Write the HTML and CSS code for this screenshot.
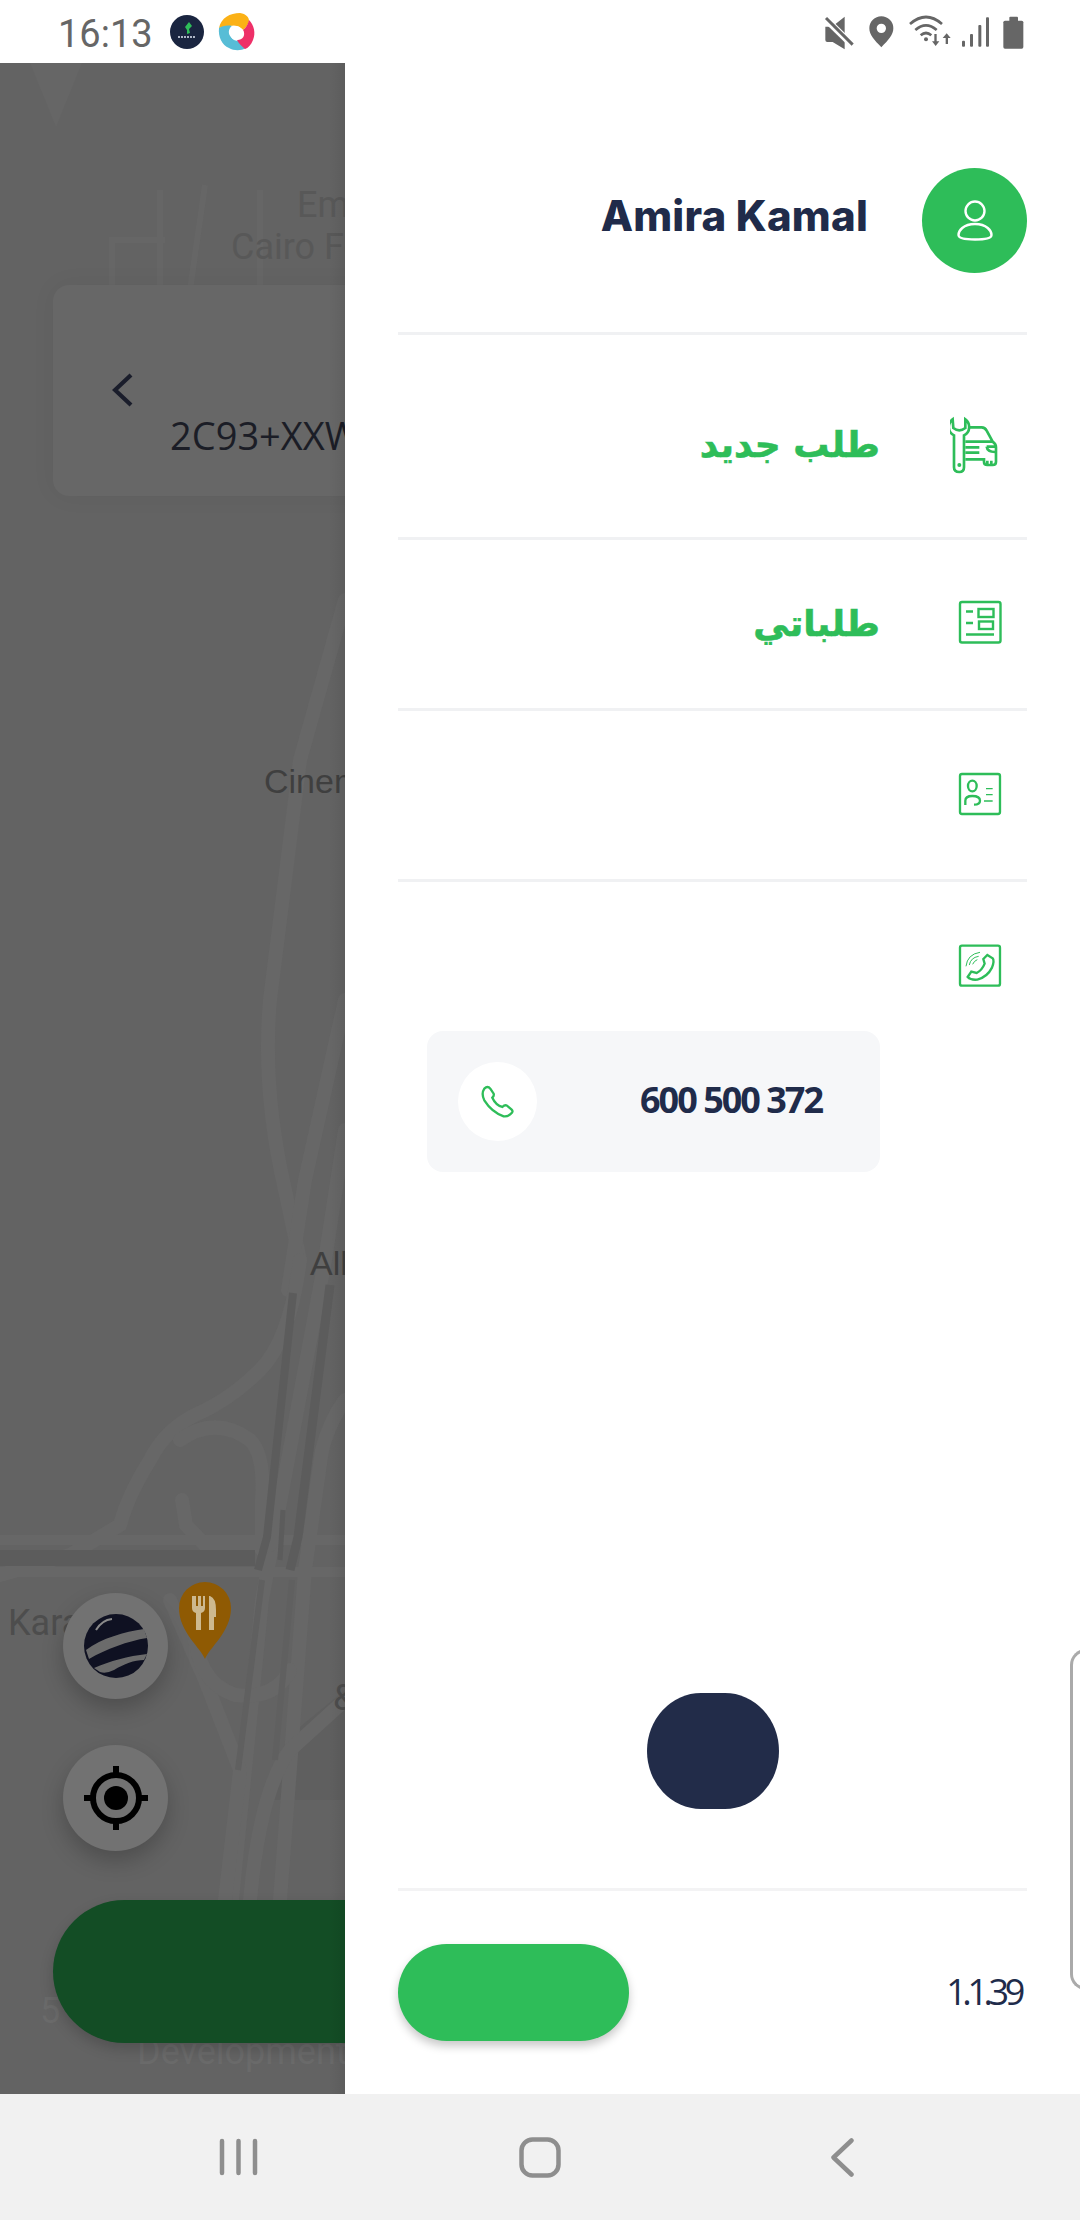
FILE: index.html
```html
<!DOCTYPE html>
<html lang="en">
<head>
<meta charset="utf-8">
<title>Menu</title>
<link rel="stylesheet" href="styles.css">
</head>
<body>
<div class="screen">
  <header class="status">
    <span class="time">16:13</span>
    <svg class="app-a" viewBox="0 0 34 34" width="34" height="34"><circle cx="17" cy="17" r="17" fill="#1a2540"/><path d="M19 7l3 4-3 3 1 4-3 1 0-4-2-3z" fill="#2ebd59"/><path d="M8 22h18" stroke="#aeb6c6" stroke-width="2" stroke-dasharray="2 1"/></svg>
    <svg class="app-b" viewBox="0 0 38 38" width="38" height="38"><path d="M1 15C3 5 12 0 22 0c6 1 9 4 9 8-1 3-3 7-6 9-3-4-8-5-13-4-4 0-8 1-11 2z" fill="#fbb116"/><path d="M1 15c3-2 8-3 13-2-4 3-4 8-1 11 2 3 5 4 8 4 2 3 4 5 7 7-5 3-12 3-17 0C4 32 0 24 1 15z" fill="#57bdd6"/><path d="M31 7c5 5 7 13 4 20-2 5-5 8-8 9-3-3-6-5-8-9 6 0 9-5 6-10 3-2 5-6 6-10z" fill="#ee3068"/><path d="M14 13c4-1 8 0 11 4 1 4-1 8-6 10-3 0-5-1-6-3-2-4-2-8 1-11z" fill="#fff"/></svg>
    <svg class="sys" viewBox="0 0 645 135" width="215" height="45" fill="#666">
      <path d="M28 50H48L86 20V118L50 96H34Q28 96 28 90Z"/>
      <path d="M26 24L110 106" stroke="#fff" stroke-width="20"/>
      <path d="M30 24L110 104" stroke="#666" stroke-width="9"/>
      <path fill-rule="evenodd" d="M196 112C175 90 160 75 160 55A36 36 0 0 1 232 55C232 75 217 90 196 112ZM196 41A14 14 0 1 0 196 69A14 14 0 1 0 196 41Z"/>
      <g fill="none" stroke="#666" stroke-width="8"><path d="M282 42Q330 0 378 42"/><path d="M298 60Q330 32 362 60"/><path d="M314 76Q330 62 346 76"/></g>
      <circle cx="330" cy="88" r="6"/>
      <path d="M355 72h7v22h8l-11 14-11-14h7zM389 102h7V84h8L392 70l-12 14h9z"/>
      <rect x="438" y="92" width="9" height="18" rx="3"/><rect x="462" y="72" width="9" height="38" rx="3"/><rect x="487" y="45" width="9" height="65" rx="3"/><rect x="510" y="22" width="9" height="88" rx="3"/>
      <rect x="562" y="32" width="60" height="84" rx="5"/><rect x="580" y="20" width="26" height="16" rx="3"/>
    </svg>
  </header>

  <main class="main">
    <section class="map">
      <svg class="roads" viewBox="0 63 345 2031" width="345" height="2031">
        <path d="M30 63H82L56 127Z" fill="#666"/>
        <g fill="none" stroke="#666" stroke-width="6"><path d="M112 290V240H165M160 190V290M205 185L190 290M260 190V290"/></g>
        <path d="M345 1690L290 1735Q275 1760 270 1800L345 1800Z" fill="#5f5f5f"/>
        <g fill="none" stroke="#676767" stroke-width="14" stroke-linecap="round">
          <path d="M345 600L300 760L270 1000Q262 1090 285 1190L300 1260"/>
          <path d="M345 1000L305 1180L288 1290"/>
          <path d="M345 1130L325 1260L262 1600L232 1900"/>
          <path d="M300 1260Q290 1340 260 1370Q230 1400 195 1415Q165 1430 150 1460Q128 1495 120 1525L70 1555L0 1575"/>
          <path d="M180 1440Q215 1415 250 1440Q265 1455 262 1500L262 1550"/>
          <path d="M182 1500L186 1525L205 1545H270"/>
          <path d="M345 1400Q330 1420 322 1450L305 1570L280 1900"/>
          <path d="M170 1600L205 1680L240 1770L225 1900"/>
          <path d="M345 1700L290 1750Q260 1790 250 1900"/>
          <path d="M195 1610Q190 1680 235 1695Q275 1700 290 1670"/>
          <path d="M0 1540H345M0 1572H345" stroke-width="10"/>
        </g>
        <g fill="none" stroke="#5c5c5c">
          <path d="M293 1293L267 1537L258 1570" stroke-width="8"/>
          <path d="M330 1285L298 1537L290 1570" stroke-width="9"/>
          <path d="M283 1510L280 1560" stroke-width="5"/>
          <path d="M0 1558H255" stroke-width="16"/>
          <path d="M262 1580L238 1770" stroke="#606060" stroke-width="6"/>
          <path d="M292 1580L275 1760" stroke="#606060" stroke-width="6"/>
        </g>
      </svg>
      <span class="label label-em">Em</span>
      <span class="label label-cairo">Cairo Fe</span>
      <span class="label label-cinema">Cinema</span>
      <span class="label label-all">All</span>
      <span class="label label-kara">Kara</span>
      <span class="label label-amp">&amp;</span>
      <span class="label label-faint label-five">5</span>
      <span class="label label-faint label-dev">Development</span>
      <div class="search-card">
        <svg class="chev" viewBox="0 0 22 34" width="22" height="34"><path d="M19 2L3 17L19 32" fill="none" stroke="#1a1d2b" stroke-width="4.200"/></svg>
        <span class="code">2C93+XXW</span>
      </div>
      <svg class="pin" viewBox="0 0 52 77" width="52" height="77"><path d="M26 77C22 66 0 50 0 26A26 26 0 0 1 52 26C52 50 30 66 26 77Z" fill="#8f5a03"/><path d="M13 14v12q0 4 4 5v17h5V31q4-1 4-5V14h-2v10h-2V14h-3v10h-2V14zM31 14q6 2 6 14v7h-2v13h-5V14z" fill="#cdb98f"/></svg>
      <button class="fab fab-globe" type="button"><svg viewBox="0 0 64 64" width="64" height="64"><circle cx="32" cy="32" r="32" fill="#0f1122"/><path d="M2 36C18 24 40 18 60 15L63 24C44 27 22 35 5 45ZM10 54C26 47 44 42 63 40L60 46C50 46 40 50 30 56Q22 60 16 58Z" fill="#6b6b6b"/><path d="M12 16Q18 6 28 5" fill="none" stroke="#8a8a8a" stroke-width="2"/></svg></button>
      <button class="fab fab-locate" type="button"><svg viewBox="0 0 64 64" width="64" height="64" fill="#000"><circle cx="32" cy="32" r="23" fill="none" stroke="#000" stroke-width="6"/><ellipse cx="32" cy="32" rx="12" ry="12"/><path d="M32 0V8M32 56V64M0 32H8M56 32H64" stroke="#000" stroke-width="6" stroke-linecap="round"/></svg></button>
      <div class="map-pill"></div>
    </section>

    <nav class="drawer">
      <div class="profile">
        <span class="name">Amira Kamal</span>
        <span class="avatar"><svg viewBox="0 0 40 44" width="40" height="44" fill="none" stroke="#fff" stroke-width="2.400"><circle cx="20" cy="12" r="9.500"/><path d="M20 25C8 25 3.500 32 3.500 36C3.500 39 9 40.500 20 40.500S36.500 39 36.500 36C36.500 32 32 25 20 25Z"/></svg></span>
      </div>
      <a class="row row-first">
        <span class="row-label" dir="rtl">طلب جديد</span>
        <svg class="row-icon" viewBox="0 0 60 60" width="60" height="60"><g transform="translate(-10 -5) scale(.3333)" fill="none" stroke="#2ebd59" stroke-width="8"><path d="M38 28C22 40 22 66 42 76V172Q42 186 58 186Q72 186 72 172V76C92 66 92 40 76 28V54Q58 68 40 54Z"/><circle cx="58" cy="165" r="6" fill="#2ebd59" stroke="none"/><path d="M88 52H125Q135 52 140 62L158 95Q168 102 168 112V155Q168 165 158 165H142Q132 165 132 155V148H76M76 95H158M76 112H118M76 128H118M140 110H165M140 110Q142 126 165 126M142 152V164M154 152V164"/></g></svg>
      </a>
      <a class="row">
        <span class="row-label" dir="rtl">طلباتي</span>
        <svg class="row-icon" viewBox="0 0 60 60" width="60" height="60" fill="none" stroke="#2ebd59" stroke-width="2.400"><rect x="10" y="8" width="40.500" height="40.500" rx="2"/><path d="M16 17.500H23M16 29H23M16 40.500H44"/><rect x="28.500" y="15" width="15" height="8"/><rect x="29" y="27.500" width="14" height="7.500"/></svg>
      </a>
      <a class="row">
        <svg class="row-icon" viewBox="0 0 60 60" width="60" height="60"><g transform="translate(-50 -25) scale(.3333)" fill="none" stroke="#2ebd59" stroke-width="7"><rect x="180" y="102" width="120" height="120" rx="6"/><ellipse cx="217" cy="138" rx="13" ry="16"/><path d="M196 195V182Q196 168 217 168Q240 168 240 182Q240 194 222 194"/><path d="M258 146H278M258 164H278M252 183H278" stroke-width="4"/></g></svg>
      </a>
      <a class="row row-last">
        <svg class="row-icon" viewBox="0 0 60 60" width="60" height="60"><g transform="translate(-50 -195) scale(.3333)" fill="none" stroke="#2ebd59" stroke-width="7"><rect x="180" y="614" width="120" height="120" rx="6"/><path d="M262 642L278 652Q284 660 276 680Q262 708 232 716Q212 718 203 708L214 692L230 696Q246 688 254 668L250 654Z"/><path d="M198 676Q202 640 240 634M208 672Q212 650 236 646M218 670Q222 660 232 656" stroke-width="3"/></g></svg>
      </a>
      <div class="phone-card">
        <span class="phone-badge"><svg viewBox="0 0 79 79" width="79" height="79"><g transform="translate(-47.670 -51.670) scale(.3333)"><path d="M222 235Q232 225 240 235L250 250Q252 256 246 262Q256 284 276 290Q284 282 290 286L304 298Q310 304 302 310Q292 320 280 318Q244 305 222 270Q212 250 222 235Z" fill="none" stroke="#2ebd59" stroke-width="7"/></g></svg></span>
        <span class="phone-number">600 500 372</span>
      </div>
      <div class="blob"></div>
      <footer class="foot">
        <div class="foot-btn"></div>
        <span class="version">1.1.39</span>
      </footer>
      <div class="edge-tab"></div>
    </nav>
  </main>

  <footer class="nav">
    <svg viewBox="0 0 39 38" width="39" height="38" fill="none" stroke="#8e8e8e" stroke-width="4.500" stroke-linecap="round"><path d="M3 3V35M19.500 3V35M36 3V35"/></svg>
    <svg class="nav-home" viewBox="0 0 42 41" width="42" height="41" fill="none" stroke="#8e8e8e" stroke-width="4.500"><rect x="2.500" y="2.500" width="37" height="36" rx="11"/></svg>
    <svg class="nav-back" viewBox="0 0 23 39" width="23" height="39" fill="none" stroke="#8e8e8e" stroke-width="4.500" stroke-linecap="round" stroke-linejoin="round"><path d="M20.500 2.500L2.500 19.500L20.500 36.500"/></svg>
  </footer>
</div>
</body>
</html>
```

FILE: styles.css
```css
* { box-sizing: border-box; }
html, body { margin: 0; padding: 0; background: #fff; }
.screen { width: 1080px; height: 2220px; display: flex; flex-direction: column; overflow: hidden; font-family: "Open Sans", sans-serif; position: relative; }

.status { height: 63px; flex: none; display: flex; align-items: center; padding: 0 49px 0 58px; background: #fff; }
.time { font: 400 38px "Roboto", sans-serif; color: #666; width: 112px; padding-top: 4px; }
.app-a { flex: none; }
.app-b { flex: none; margin-left: 14px; }
.sys { flex: none; margin-left: auto; margin-top: 2px; }

.main { flex: 1; display: flex; min-height: 0; }

.map { width: 345px; flex: none; position: relative; overflow: hidden; background: #636363; }
.map::after { content: ""; position: absolute; top: 0; bottom: 0; right: 0; width: 16px; background: linear-gradient(to right, rgba(0,0,0,0), rgba(0,0,0,.07)); }
.roads { position: absolute; left: 0; top: 0; display: block; }
.label { position: absolute; white-space: nowrap; font: 400 36px "Roboto", sans-serif; line-height: 44px; color: #505050; }
.label-em { left: 297px; top: 120px; color: #585858; }
.label-cairo { left: 231px; top: 162px; color: #585858; }
.label-cinema { left: 264px; top: 696px; color: #3f3f3f; font-family: "Liberation Sans", sans-serif; font-size: 34px; }
.label-all { left: 310px; top: 1178px; color: #3f3f3f; font-family: "Liberation Sans", sans-serif; font-size: 34px; }
.label-kara { left: 8px; top: 1538px; color: #4d4d4d; }
.label-amp { left: 333px; top: 1613px; color: #4d4d4d; }
.label-faint { color: #6a6a6a; }
.label-five { left: 40px; top: 1926px; }
.label-dev { left: 137px; top: 1967px; }

.search-card { position: absolute; left: 53px; top: 222px; width: 320px; height: 211px; border-radius: 16px; background: #676767; box-shadow: 0 0 24px rgba(0,0,0,.05); }
.chev { position: absolute; left: 59px; top: 88px; }
.code { position: absolute; left: 117px; top: 125px; font-size: 38px; line-height: 50px; color: #1b1d26; white-space: nowrap; }

.pin { position: absolute; left: 179px; top: 1519px; }
.fab { position: absolute; left: 63px; width: 105px; height: 106px; padding: 0; border: 0; border-radius: 50%; background: #727272; box-shadow: 0 10px 22px rgba(0,0,0,.22); display: flex; align-items: center; justify-content: center; }
.fab svg { display: block; }
.fab-globe { top: 1530px; }
.fab-locate { top: 1682px; }
.map-pill { position: absolute; left: 53px; top: 1837px; width: 360px; height: 143px; border-radius: 72px; background: #134d25; box-shadow: 0 6px 14px rgba(0,0,0,.18); }

.drawer { flex: 1; padding: 0 53px; display: flex; flex-direction: column; background: #fff; position: relative; }
.profile { height: 272px; flex: none; padding-top: 105px; display: flex; justify-content: flex-end; align-items: flex-start; gap: 54px; border-bottom: 3px solid #f0f1f3; }
.name { font: 800 42px/96px "Inter", sans-serif; color: #202b4a; letter-spacing: .2px; }
.avatar { width: 105px; height: 105px; border-radius: 50%; background: #2ebd59; display: flex; align-items: center; justify-content: center; flex: none; }

.row { height: 171px; flex: none; display: flex; justify-content: flex-end; align-items: center; gap: 70px; padding-right: 0; border-bottom: 3px solid #f0f1f3; }
.row-first { height: 205px; padding-top: 18px; }
.row-last { height: 149px; padding-top: 18px; border-bottom: 0; }
.row-icon { display: block; flex: none; margin-right: 17px; }
.row-label { font: 700 36px/60px "DejaVu Sans", sans-serif; color: #2ebd59; -webkit-text-stroke: .6px #2ebd59; }

.phone-card { width: 453px; height: 141px; margin-left: 29px; flex: none; border-radius: 16px; background: #f6f7f9; display: flex; align-items: center; justify-content: space-between; padding: 0 58px 0 31px; }
.phone-badge { width: 79px; height: 79px; border-radius: 50%; background: #fff; flex: none; display: block; }
.phone-badge svg { display: block; }
.phone-number { font-weight: 700; font-size: 36px; letter-spacing: -2px; color: #202b4a; white-space: nowrap; padding-bottom: 4px; }

.blob { width: 132px; height: 116px; margin-top: 521px; align-self: center; flex: none; border-radius: 54px / 58px; background: #222c49; }
.foot { margin-top: 79px; padding-top: 53px; border-top: 3px solid #f3f3f4; display: flex; justify-content: space-between; align-items: center; padding-right: 6px; }
.foot-btn { width: 231px; height: 97px; border-radius: 49px; background: #2ebd59; box-shadow: 0 5px 10px rgba(0,0,0,.22); }
.version { font-size: 36px; letter-spacing: -4.400px; color: #202b4a; padding-bottom: 2px; }

.edge-tab { position: absolute; left: 725px; top: 1586px; width: 40px; height: 341px; border: 3px solid #aaa; border-right: 0; border-radius: 16px 0 0 16px; background: #fff; }

.nav { height: 126px; flex: none; background: #f1f1f1; display: flex; align-items: center; padding-left: 219px; }
.nav svg { display: block; flex: none; }
.nav-home { margin-left: 261px; }
.nav-back { margin-left: 270px; }
```
